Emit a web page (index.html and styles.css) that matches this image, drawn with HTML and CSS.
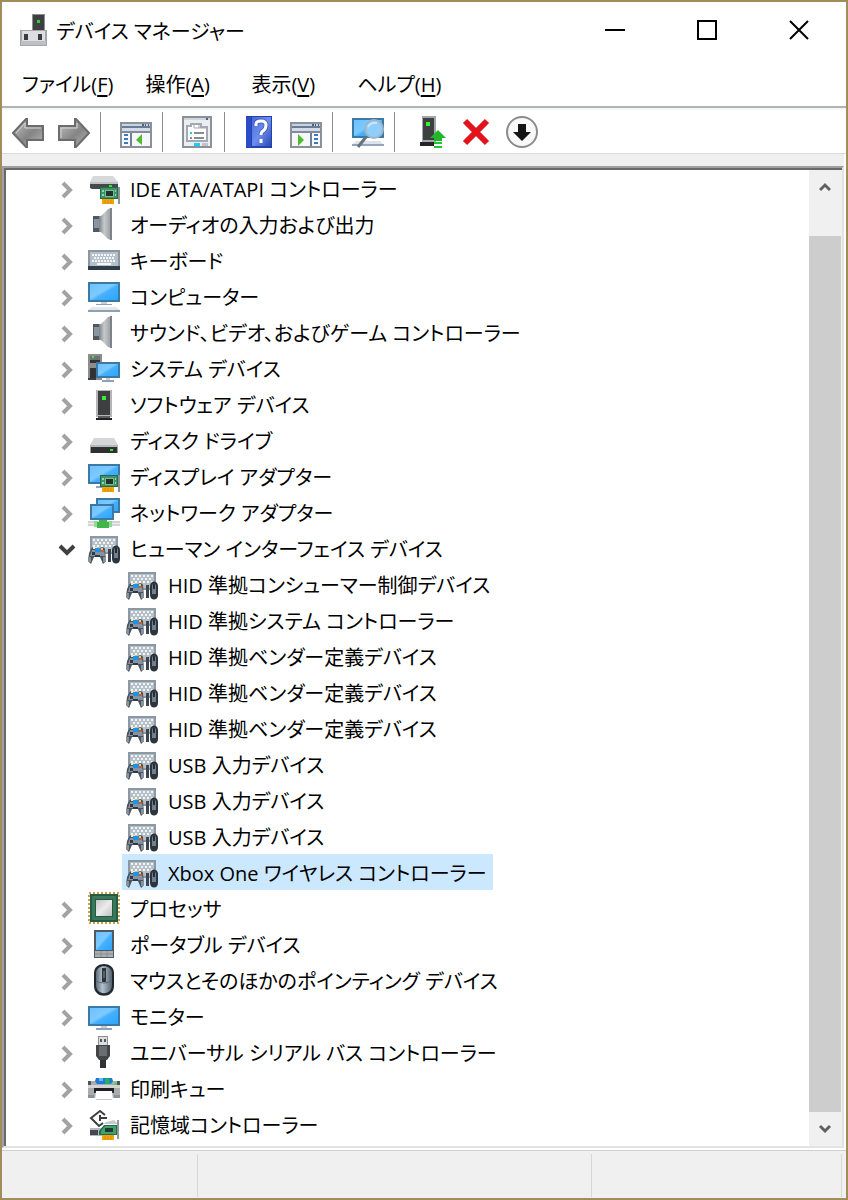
FILE: index.html
```html
<!DOCTYPE html>
<html lang="ja">
<head>
  <meta charset="UTF-8">
  <meta name="viewport" content="width=device-width, initial-scale=1">
  <title>デバイス マネージャー</title>
  <link rel="stylesheet" href="styles.css">
</head>
<body>

<!-- icon sprite -->
<svg class="sprite" aria-hidden="true">
  <defs>
    <linearGradient id="screen" x1="0" y1="0" x2="1" y2="1">
      <stop offset="0" stop-color="#6cc0ff"/><stop offset=".45" stop-color="#7ccaff"/><stop offset=".55" stop-color="#45b0ff"/><stop offset="1" stop-color="#2aa4fb"/>
    </linearGradient>
    <linearGradient id="metal" x1="0" y1="0" x2="1" y2="0">
      <stop offset="0" stop-color="#7c8288"/><stop offset=".4" stop-color="#c6cacd"/><stop offset="1" stop-color="#92979c"/>
    </linearGradient>
    <linearGradient id="silver" x1="0" y1="0" x2="1" y2="1">
      <stop offset="0" stop-color="#c4c4c4"/><stop offset=".5" stop-color="#ececec"/><stop offset="1" stop-color="#c0c0c0"/>
    </linearGradient>
    <linearGradient id="arrow" x1="0" y1="0" x2="1" y2="1">
      <stop offset="0" stop-color="#c4c4c4"/><stop offset=".55" stop-color="#858585"/><stop offset="1" stop-color="#b4b4b4"/>
    </linearGradient>
    <linearGradient id="book" x1="0" y1="0" x2="1" y2="1">
      <stop offset="0" stop-color="#4668dc"/><stop offset=".5" stop-color="#6f8df0"/><stop offset="1" stop-color="#2848b4"/>
    </linearGradient>
    <linearGradient id="shell" x1="0" y1="0" x2="1" y2="0">
      <stop offset="0" stop-color="#5f6c7a"/><stop offset=".4" stop-color="#b4c2d0"/><stop offset="1" stop-color="#56626e"/>
    </linearGradient>
  </defs>

  <symbol id="i-card" viewBox="0 0 32 32">
    <path d="M28 15h4v17h-2V17h-2z" fill="#8e9296"/>
    <path d="M12 15h18v12H12z" fill="#1f6e48"/>
    <path d="M13 16h16v10H13z" fill="#3c9467"/>
    <path d="M17 18h9v7h-9z" fill="#7fb89a"/>
    <path d="M18 19h7v5h-7z" fill="#22332c"/>
    <path d="M14 18h2v2h-2zM14 22h2v2h-2zM27 18h1v2h-1zM27 22h1v2h-1z" fill="#9fd0b4"/>
    <path d="M14 27h12v5H14z" fill="#f5a30a"/>
    <path d="M17 28v4M20 28v4M23 28v4" stroke="#dc8c00"/>
  </symbol>

  <symbol id="i-ide" viewBox="0 0 32 32">
    <path d="M5 4h20l5 6v1H2v-1z" fill="#d6d8da"/>
    <path d="M2 10h28v2H2z" fill="#bfc2c5"/>
    <path d="M2 12h28v5H4l-2-1z" fill="#45484a"/>
    <path d="M21 13h3v2h-3z" fill="#2ee82e"/>
    <use href="#i-card"/>
  </symbol>

  <symbol id="i-speaker" viewBox="0 0 32 32">
    <path d="M11 8h2l7-7 4-1v32l-4-1-7-7h-2z" fill="url(#metal)"/>
    <path d="M22 0h2v32h-2z" fill="#7d8389"/>
    <path d="M5 8h6v16H5z" fill="#4e5861"/>
    <path d="M6 11h5v9H6z" fill="#8996a1"/>
  </symbol>

  <symbol id="i-keyboard" viewBox="0 0 32 32">
    <path d="M0 6h32v20H0z" fill="#8a96a1"/>
    <path d="M2 8h28v14H2z" fill="#b6c0c9"/>
    <path d="M4 11h24M6 14h21M4 17h24" stroke="#f4f6f8" stroke-width="2" stroke-dasharray="2 1"/>
    <path d="M9 20h14" stroke="#f4f6f8" stroke-width="2"/>
    <path d="M0 22h32v4H0z" fill="#303c47"/>
  </symbol>

  <symbol id="i-monitor" viewBox="0 0 32 32">
    <path d="M1 7h30v18H1z" fill="url(#screen)" stroke="#3c7aa5" stroke-width="2"/>
    <path d="M13 26h6v2h-6z" fill="#c5cfda"/>
    <path d="M8 28h16v2H8z" fill="#91a1b8"/>
  </symbol>

  <symbol id="i-computer" viewBox="0 0 32 32">
    <path d="M1 3h30v18H1z" fill="url(#screen)" stroke="#3c7aa5" stroke-width="2"/>
    <path d="M8 24h16v1H8z" fill="#91a1b8"/>
    <path d="M13 22h6v2h-6z" fill="#c5cfda"/>
    <path d="M4 27h24l4 3H0z" fill="#e2e7ec"/>
    <path d="M0 30h32v2H0z" fill="#8fa0b6"/>
  </symbol>

  <symbol id="i-system" viewBox="0 0 32 32">
    <path d="M0 2h14v26H0z" fill="#8b8d8f"/>
    <path d="M2 4h10v4H2z" fill="#6e7072"/>
    <path d="M2 8h10v3H2zM2 16h7v10H2z" fill="#303234"/>
    <path d="M4 4h2v2H4z" fill="#35ef35"/>
    <path d="M0 26h8v2H0z" fill="#3a3c3e"/>
    <path d="M9 11h22v14H9z" fill="url(#screen)" stroke="#3c7aa5" stroke-width="2"/>
    <path d="M18 26h4v2h-4z" fill="#c5cfda"/>
    <path d="M14 28h12v2H14z" fill="#91a1b8"/>
  </symbol>

  <symbol id="i-tower" viewBox="0 0 32 32">
    <path d="M8 2h16v27H8z" fill="#b4b6b8"/>
    <path d="M10 3h12v24H10z" fill="#3d3f40"/>
    <path d="M14 8h4v4h-4z" fill="#35f035"/>
    <path d="M10 28h12v2H10z" fill="#5a5c5e"/>
    <path d="M8 30h16v2H8z" fill="#202122"/>
  </symbol>

  <symbol id="i-disk" viewBox="0 0 32 32">
    <path d="M6 14h20l4 7H2z" fill="#d4d6d8"/>
    <path d="M2 21h28v2H2z" fill="#b8babc"/>
    <path d="M3 23h26v6H3z" fill="#2e3032"/>
    <path d="M2 23h1v6H2zM29 23h1v6h-1z" fill="#9a9c9e"/>
    <path d="M22 25h3v2h-3z" fill="#2ee82e"/>
  </symbol>

  <symbol id="i-display" viewBox="0 0 32 32">
    <path d="M1 5h30v18H1z" fill="url(#screen)" stroke="#3c7aa5" stroke-width="2"/>
    <path d="M8 26h8v2H8z" fill="#91a1b8"/>
    <use href="#i-card"/>
  </symbol>

  <symbol id="i-network" viewBox="0 0 32 32">
    <path d="M0 25h32v5H0z" fill="#d3d5d7"/>
    <path d="M0 27h32v1H0z" fill="#eceeef"/>
    <path d="M9 3h22v13H9z" fill="url(#screen)" stroke="#3c7aa5" stroke-width="2"/>
    <path d="M3 9h22v14H3z" fill="url(#screen)" stroke="#3c7aa5" stroke-width="2"/>
    <path d="M11 24h8v2h2v6H9v-6h2z" fill="#3fb54a"/>
    <path d="M6 25h3v6H6zM21 25h3v6h-3z" fill="#8fdc8f"/>
  </symbol>

  <symbol id="i-hid" viewBox="0 0 32 32">
    <path d="M2 4h28v18H2z" fill="#8c98a3"/>
    <path d="M4 6h24v14H4z" fill="#b5bfc8"/>
    <path d="M5 8h22M7 11h20M5 14h22" stroke="#f2f4f6" stroke-width="2" stroke-dasharray="2 2"/>
    <path d="M3 17c1-2 3-2 4-1h5c2-1 4-1 5 1l1 12-3 3-3-7H6l-3 7-3-3 1-8z" fill="#4a545e"/>
    <path d="M4 18h12l1 6H2z" fill="#8793a0"/>
    <path d="M0 25h3v5H0zM15 25h3v5h-3z" fill="#87929c"/>
    <path d="M5 15h4v2H5z" fill="#f5e9b0"/>
    <path d="M7 16h6v4H7z" fill="#1d93e8"/>
    <path d="M13 16h2v2h-2z" fill="#f4c94b"/>
    <path d="M13 18h3v2h-3z" fill="#d9552b"/>
    <path d="M4 20h3v3H4zM7 23h5v2H7z" fill="#313a42"/>
    <path d="M20 17h3v13h-3z" fill="#3b454f"/>
    <path d="M24 18c0-6 8-6 8 0v9c0 6-8 6-8 0z" fill="#2c353e"/>
    <path d="M26 18c0-3 4-3 4 0v8h-4z" fill="#71808f"/>
    <path d="M27 16h2v5h-2z" fill="#252c33"/>
  </symbol>

  <symbol id="i-cpu" viewBox="0 0 32 32">
    <path d="M1 1h30v30H1z" fill="none" stroke="#c9a14a" stroke-width="2" stroke-dasharray="2 2"/>
    <path d="M2 2h28v28H2z" fill="#245c43"/>
    <path d="M4 4h24v24H4z" fill="#39785a"/>
    <path d="M7 7h18v18H7z" fill="#285642"/>
    <path d="M8 8h16v16H8z" fill="url(#silver)"/>
  </symbol>

  <symbol id="i-portable" viewBox="0 0 32 32">
    <path d="M6 2h20v28H6z" fill="#4e5a64"/>
    <path d="M8 4h16v18H8z" fill="url(#screen)"/>
    <path d="M7 23h18v6H7z" fill="#a9adb1"/>
    <path d="M7 26h18M13 23v6M19 23v6" stroke="#8a9095"/>
  </symbol>

  <symbol id="i-mouse" viewBox="0 0 32 32">
    <path d="M6 9c0-12 20-12 20 0v13c0 13-20 13-20 0z" fill="#20272e"/>
    <path d="M8 9c0-9 16-9 16 0v12c0 11-16 11-16 0z" fill="url(#shell)"/>
    <path d="M8 17q8 4 16 0" fill="none" stroke="#5c6a78"/>
    <path d="M14 4h4v14h-4z" fill="#2e343a"/>
    <path d="M15 7h2v7h-2z" fill="#596169"/>
  </symbol>

  <symbol id="i-usb" viewBox="0 0 32 32">
    <path d="M10 0h10v9H10z" fill="#8d8f91"/>
    <path d="M11 1h8v8h-8z" fill="#dcdee0"/>
    <path d="M12 3h2v3h-2zM16 3h2v3h-2z" fill="#55585a"/>
    <path d="M8 9h14v11l-3 4h-8l-3-4z" fill="#434547"/>
    <path d="M11 10h8v10h-8z" fill="#6b6e70"/>
    <path d="M12 24h6v8h-6z" fill="#303234"/>
  </symbol>

  <symbol id="i-printer" viewBox="0 0 32 32">
    <path d="M8 6h16l2 6H6z" fill="#2278d6"/>
    <path d="M11 6h4v3h-4z" fill="#6fb8f8"/>
    <path d="M17 6h4l1 6h-5z" fill="#1fb060"/>
    <path d="M3 9h4l2 3h14l2-3h4l3 4v13H0V13z" fill="#aaadb0"/>
    <path d="M0 13h32v3H0z" fill="#d2d4d6"/>
    <path d="M0 9h3v4H0zM29 9h3v4h-3z" fill="#505356"/>
    <path d="M26 11h3v2h-3z" fill="#35e835"/>
    <path d="M6 16h20v5H6z" fill="#1e2022"/>
    <path d="M8 19h16l1 9H7z" fill="#fff"/>
    <path d="M8 27h16v1H8z" fill="#c5c7c9"/>
    <path d="M0 23h6v3H0zM26 23h6v3h-6z" fill="#8f9295"/>
  </symbol>

  <symbol id="i-storage" viewBox="0 0 32 32">
    <path d="M2 20h20v8H2z" fill="#b4b8bb"/>
    <path d="M2 22h8v5H2z" fill="#44484c"/>
    <path d="M18 14l8-2 4 4H16z" fill="#c8cbce"/>
    <path d="M17 7l-5-4-9 7 8 8 4-3" fill="none" stroke="#3c3f42" stroke-width="2"/>
    <path d="M19 10h-8M12 7v6" fill="none" stroke="#3c3f42" stroke-width="2"/>
    <path d="M29 12h2v19h-2z" fill="#94989c"/>
    <path d="M11 23l5-6h13v10H11z" fill="#1f6e48"/>
    <path d="M13 23l4-5h11v8H13z" fill="#43a072"/>
    <path d="M17 20h8v4h-8z" fill="#203a2e"/>
    <path d="M14 27h12v5H14z" fill="#f5a30a"/>
    <path d="M17 28v4M20 28v4M23 28v4" stroke="#dc8c00"/>
  </symbol>

  <symbol id="i-app" viewBox="0 0 32 32">
    <path d="M14 0h13v17H14z" fill="#8d8f91"/>
    <path d="M15 1h11v16H15z" fill="#3d3f41"/>
    <path d="M19 6h3v3h-3z" fill="#2fd02f"/>
    <path d="M2 16h27v16H2z" fill="#a4a6aa"/>
    <path d="M4 17h23v10H4z" fill="#dcdee2"/>
    <path d="M3 27h25v4H3z" fill="#bcbfc3"/>
    <path d="M6 20h4v6H6zM20 20h4v6h-4z" fill="#3a3c3e"/>
  </symbol>

  <symbol id="t-back" viewBox="0 0 32 32">
    <path d="M1 17L14 3h1v7h16v14H15v7h-1z" fill="url(#arrow)" stroke="#6c6c6c" stroke-width="2"/>
    <path d="M4 17l9-10v5h16" fill="none" stroke="#d6d6d6"/>
  </symbol>
  <symbol id="t-forward" viewBox="0 0 32 32">
    <path d="M31 17L18 3h-1v7H1v14h16v7h1z" fill="url(#arrow)" stroke="#6c6c6c" stroke-width="2"/>
    <path d="M3 22V12h16V7" fill="none" stroke="#d6d6d6"/>
  </symbol>
  <symbol id="t-frame" viewBox="0 0 32 32">
    <path d="M1 7h30v24H1z" fill="#f6f7f8" stroke="#8b9199" stroke-width="2"/>
    <path d="M2 8h28v2H2z" fill="#c9d3e2"/>
    <path d="M2 10h28v2H2z" fill="#6b7b95"/>
    <path d="M2 12h28v3H2z" fill="#d5dbe4"/>
    <path d="M2 15h28v2H2z" fill="#7f8ba0"/>
    <path d="M22 8h2v2h-2zM25 8h1v2h-1zM28 8h1v2h-1z" fill="#4b5f82"/>
  </symbol>
  <symbol id="t-tree" viewBox="0 0 32 32">
    <use href="#t-frame"/>
    <path d="M10 17h2v13h-2z" fill="#6f7f9a"/>
    <path d="M4 19h4M4 23h4M4 27h4" stroke="#3f79bd" stroke-width="2"/>
    <path d="M16 24l6-6v11z" fill="#4fbb2d"/>
  </symbol>
  <symbol id="t-action" viewBox="0 0 32 32">
    <use href="#t-frame"/>
    <path d="M20 17h2v13h-2z" fill="#6f7f9a"/>
    <path d="M24 19h4M24 23h4M24 27h4" stroke="#3f79bd" stroke-width="2"/>
    <path d="M8 18l6 6-6 6z" fill="#4fbb2d"/>
  </symbol>
  <symbol id="t-properties" viewBox="0 0 32 32">
    <path d="M1 1h28v30H1z" fill="#eceef0" stroke="#8b9199" stroke-width="2"/>
    <path d="M2 2h26v2H2z" fill="#d0d6de"/>
    <path d="M24 2h2v2h-2z" fill="#4b5f82"/>
    <path d="M5 10h4V8h10v3h6v14H5z" fill="#fff" stroke="#a4a8b4" stroke-width="2"/>
    <path d="M12 9v3h13M17 9v3" fill="none" stroke="#a4a8b4"/>
    <path d="M8 16h2v2H8z" fill="#18cdf2"/>
    <path d="M8 21h2v2H8zM12 16h10v2H12zM12 21h10v2H12z" fill="#868c94"/>
    <path d="M12 27h6v3h-6z" fill="#18cdf2"/>
    <path d="M20 27h6v3h-6z" fill="#bfc4c9"/>
  </symbol>
  <symbol id="t-help" viewBox="0 0 32 32">
    <path d="M2 0h26v32H2z" fill="#2342ac"/>
    <path d="M8 1h19v29H8z" fill="url(#book)"/>
    <path d="M2 1h5v30H2z" fill="#2a4cc8"/>
    <path d="M12 10V8q0-3 5-3t5 4-3 6q-2 1-2 4" fill="none" stroke="#1c348c" stroke-width="5" opacity=".4"/>
    <path d="M12 10V8q0-3 5-3t5 4-3 6q-2 1-2 4M17 23v4" fill="none" stroke="#fff" stroke-width="3"/>
  </symbol>
  <symbol id="t-scan" viewBox="0 0 32 32">
    <path d="M1 3h30v18H1z" fill="url(#screen)" stroke="#3c7aa5" stroke-width="2"/>
    <path d="M4 25h24l4 4H0z" fill="#dde3ea"/>
    <path d="M0 28h32v2H0z" fill="#96a5b8"/>
    <path d="M14 21L6 31" stroke="#66727e" stroke-width="3"/>
    <circle cx="22" cy="13" r="9" fill="#8fcdfa" stroke="#9fb4c6" stroke-width="2"/>
    <path d="M16 11q3-5 9-4" fill="none" stroke="#c9e7fd" stroke-width="2"/>
  </symbol>
  <symbol id="t-update" viewBox="0 0 32 32">
    <path d="M8 0h14v26H8z" fill="#a5a8aa"/>
    <path d="M9 2h11v22H9z" fill="#3d3f40"/>
    <path d="M12 6h4v4h-4z" fill="#35f035"/>
    <path d="M6 26h14v4H6z" fill="#222426"/>
    <path d="M24 14l8 8h-4v3h-8v-3h-4z" fill="#1fb82a"/>
    <path d="M20 27h8M20 31h8" stroke="#1fc832" stroke-width="2"/>
  </symbol>
  <symbol id="t-remove" viewBox="0 0 32 32">
    <path d="M5 5l22 22M27 5L5 27" stroke="#e3131b" stroke-width="6"/>
  </symbol>
  <symbol id="t-disable" viewBox="0 0 32 32">
    <circle cx="16" cy="16" r="15" fill="#f8f8f8" stroke="#8c8c8c" stroke-width="2"/>
    <path d="M12 8h8v8h5l-9 9-9-9h5z" fill="#141414"/>
  </symbol>

  <symbol id="i-closed" viewBox="0 0 12 18">
    <path d="M2 2l7 7-7 7" fill="none" stroke="#a3a3a3" stroke-width="4"/>
  </symbol>
  <symbol id="i-open" viewBox="0 0 18 12">
    <path d="M2 2l7 7 7-7" fill="none" stroke="#404040" stroke-width="4"/>
  </symbol>
</svg>

<div class="window">
  <header class="titlebar">
    <svg class="app-icon"><use href="#i-app"/></svg>
    <h1 class="title">デバイス マネージャー</h1>
    <button class="control" aria-label="最小化"><svg viewBox="0 0 20 20"><path d="M0 10h20"/></svg></button>
    <button class="control" aria-label="最大化"><svg viewBox="0 0 20 20"><path d="M1 1h18v18H1z"/></svg></button>
    <button class="control" aria-label="閉じる"><svg viewBox="0 0 20 20"><path d="M1 1l18 18M19 1L1 19"/></svg></button>
  </header>

  <nav class="menubar">
    <button class="menu">ファイル(<u>F</u>)</button>
    <button class="menu">操作(<u>A</u>)</button>
    <button class="menu">表示(<u>V</u>)</button>
    <button class="menu">ヘルプ(<u>H</u>)</button>
  </nav>

  <div class="toolbar">
    <button class="tool" aria-label="戻る"><svg><use href="#t-back"/></svg></button>
    <button class="tool" aria-label="進む"><svg><use href="#t-forward"/></svg></button>
    <span class="separator"></span>
    <button class="tool" aria-label="コンソール ツリーの表示"><svg><use href="#t-tree"/></svg></button>
    <span class="separator"></span>
    <button class="tool" aria-label="プロパティ"><svg><use href="#t-properties"/></svg></button>
    <span class="separator"></span>
    <button class="tool" aria-label="ヘルプ"><svg><use href="#t-help"/></svg></button>
    <button class="tool" aria-label="操作ウィンドウの表示"><svg><use href="#t-action"/></svg></button>
    <span class="separator"></span>
    <button class="tool" aria-label="ハードウェア変更のスキャン"><svg><use href="#t-scan"/></svg></button>
    <span class="separator"></span>
    <button class="tool" aria-label="ドライバーの更新"><svg><use href="#t-update"/></svg></button>
    <button class="tool" aria-label="アンインストール"><svg><use href="#t-remove"/></svg></button>
    <button class="tool" aria-label="無効にする"><svg><use href="#t-disable"/></svg></button>
  </div>

  <main class="pane">
    <ul class="tree">
      <li><div class="row"><button class="expander" aria-label="展開"><svg class="closed"><use href="#i-closed"/></svg></button><span class="item"><svg class="icon"><use href="#i-ide"/></svg>IDE ATA/ATAPI コントローラー</span></div></li>
      <li><div class="row"><button class="expander" aria-label="展開"><svg class="closed"><use href="#i-closed"/></svg></button><span class="item"><svg class="icon"><use href="#i-speaker"/></svg>オーディオの入力および出力</span></div></li>
      <li><div class="row"><button class="expander" aria-label="展開"><svg class="closed"><use href="#i-closed"/></svg></button><span class="item"><svg class="icon"><use href="#i-keyboard"/></svg>キーボード</span></div></li>
      <li><div class="row"><button class="expander" aria-label="展開"><svg class="closed"><use href="#i-closed"/></svg></button><span class="item"><svg class="icon"><use href="#i-computer"/></svg>コンピューター</span></div></li>
      <li><div class="row"><button class="expander" aria-label="展開"><svg class="closed"><use href="#i-closed"/></svg></button><span class="item"><svg class="icon"><use href="#i-speaker"/></svg>サウンド、ビデオ、およびゲーム コントローラー</span></div></li>
      <li><div class="row"><button class="expander" aria-label="展開"><svg class="closed"><use href="#i-closed"/></svg></button><span class="item"><svg class="icon"><use href="#i-system"/></svg>システム デバイス</span></div></li>
      <li><div class="row"><button class="expander" aria-label="展開"><svg class="closed"><use href="#i-closed"/></svg></button><span class="item"><svg class="icon"><use href="#i-tower"/></svg>ソフトウェア デバイス</span></div></li>
      <li><div class="row"><button class="expander" aria-label="展開"><svg class="closed"><use href="#i-closed"/></svg></button><span class="item"><svg class="icon"><use href="#i-disk"/></svg>ディスク ドライブ</span></div></li>
      <li><div class="row"><button class="expander" aria-label="展開"><svg class="closed"><use href="#i-closed"/></svg></button><span class="item"><svg class="icon"><use href="#i-display"/></svg>ディスプレイ アダプター</span></div></li>
      <li><div class="row"><button class="expander" aria-label="展開"><svg class="closed"><use href="#i-closed"/></svg></button><span class="item"><svg class="icon"><use href="#i-network"/></svg>ネットワーク アダプター</span></div></li>
      <li>
        <div class="row"><button class="expander" aria-label="折りたたむ"><svg class="open"><use href="#i-open"/></svg></button><span class="item"><svg class="icon"><use href="#i-hid"/></svg>ヒューマン インターフェイス デバイス</span></div>
        <ul class="children">
          <li class="row"><span class="item"><svg class="icon"><use href="#i-hid"/></svg>HID 準拠コンシューマー制御デバイス</span></li>
          <li class="row"><span class="item"><svg class="icon"><use href="#i-hid"/></svg>HID 準拠システム コントローラー</span></li>
          <li class="row"><span class="item"><svg class="icon"><use href="#i-hid"/></svg>HID 準拠ベンダー定義デバイス</span></li>
          <li class="row"><span class="item"><svg class="icon"><use href="#i-hid"/></svg>HID 準拠ベンダー定義デバイス</span></li>
          <li class="row"><span class="item"><svg class="icon"><use href="#i-hid"/></svg>HID 準拠ベンダー定義デバイス</span></li>
          <li class="row"><span class="item"><svg class="icon"><use href="#i-hid"/></svg>USB 入力デバイス</span></li>
          <li class="row"><span class="item"><svg class="icon"><use href="#i-hid"/></svg>USB 入力デバイス</span></li>
          <li class="row"><span class="item"><svg class="icon"><use href="#i-hid"/></svg>USB 入力デバイス</span></li>
          <li class="row"><span class="item selected"><svg class="icon"><use href="#i-hid"/></svg>Xbox One ワイヤレス コントローラー</span></li>
        </ul>
      </li>
      <li><div class="row"><button class="expander" aria-label="展開"><svg class="closed"><use href="#i-closed"/></svg></button><span class="item"><svg class="icon"><use href="#i-cpu"/></svg>プロセッサ</span></div></li>
      <li><div class="row"><button class="expander" aria-label="展開"><svg class="closed"><use href="#i-closed"/></svg></button><span class="item"><svg class="icon"><use href="#i-portable"/></svg>ポータブル デバイス</span></div></li>
      <li><div class="row"><button class="expander" aria-label="展開"><svg class="closed"><use href="#i-closed"/></svg></button><span class="item"><svg class="icon"><use href="#i-mouse"/></svg>マウスとそのほかのポインティング デバイス</span></div></li>
      <li><div class="row"><button class="expander" aria-label="展開"><svg class="closed"><use href="#i-closed"/></svg></button><span class="item"><svg class="icon"><use href="#i-monitor"/></svg>モニター</span></div></li>
      <li><div class="row"><button class="expander" aria-label="展開"><svg class="closed"><use href="#i-closed"/></svg></button><span class="item"><svg class="icon"><use href="#i-usb"/></svg>ユニバーサル シリアル バス コントローラー</span></div></li>
      <li><div class="row"><button class="expander" aria-label="展開"><svg class="closed"><use href="#i-closed"/></svg></button><span class="item"><svg class="icon"><use href="#i-printer"/></svg>印刷キュー</span></div></li>
      <li><div class="row"><button class="expander" aria-label="展開"><svg class="closed"><use href="#i-closed"/></svg></button><span class="item"><svg class="icon"><use href="#i-storage"/></svg>記憶域コントローラー</span></div></li>
    </ul>

    <div class="scrollbar">
      <button class="scroll-btn" aria-label="上へスクロール"><svg viewBox="0 0 12 10"><path d="M1 8l5-5 5 5"/></svg></button>
      <div class="track"><div class="thumb"></div></div>
      <button class="scroll-btn" aria-label="下へスクロール"><svg viewBox="0 0 12 10"><path d="M1 2l5 5 5-5"/></svg></button>
    </div>
  </main>

  <footer class="statusbar">
    <span class="status"></span>
    <span class="status"></span>
    <span class="status"></span>
  </footer>
</div>

</body>
</html>
```
FILE: styles.css
```css
* { box-sizing: border-box; }
body {
  margin: 0;
  font-family: "Open Sans", "Noto Sans CJK JP", sans-serif;
  font-size: 20px;
  font-weight: 400;
  font-feature-settings: "palt";
  color: #000;
}
button {
  padding: 0;
  border: none;
  background: none;
  font: inherit;
  font-feature-settings: inherit;
  color: inherit;
}
ul { list-style: none; margin: 0; padding: 0; }
.sprite { position: absolute; width: 0; height: 0; }

.window {
  display: flex;
  flex-direction: column;
  min-height: 100vh;
  border: 2px solid #a08d5c;
  background: #fff;
}

.titlebar {
  display: flex;
  align-items: center;
  height: 56px;
  padding: 0 1px 0 16px;
}
.app-icon { width: 32px; height: 32px; }
.title {
  flex: 1;
  margin: 0 0 0 6px;
  font-size: 20px;
  font-weight: 400;
}
.control {
  display: flex;
  align-items: center;
  justify-content: center;
  width: 92px;
  height: 100%;
}
.control svg {
  width: 20px;
  height: 20px;
  fill: none;
  stroke: #000;
  stroke-width: 2px;
}

.menubar {
  display: flex;
  gap: 32px;
  height: 50px;
  padding: 2px 20px 0;
  border-bottom: 2px solid #b2b2b2;
}
.menu { min-width: 74px; text-align: left; }
.menu u { text-decoration-thickness: 2px; text-underline-offset: 3px; }

.toolbar {
  display: flex;
  align-items: center;
  height: 46px;
  padding: 0 3px;
  border-top: 2px solid #f2f7fb;
  border-bottom: 1px solid #dadada;
}
.tool {
  display: flex;
  justify-content: center;
  width: 46px;
}
.tool svg { width: 32px; height: 32px; }
.separator {
  width: 1px;
  height: 40px;
  margin: 0 12px 0 3px;
  background: #8c8c8c;
}

.pane {
  flex: 1;
  display: flex;
  margin: 12px 2px 2px 0;
  border: 2px solid #a0a0a0;
  border-right-color: #e3e3e3;
  border-bottom-color: #e3e3e3;
  /* grey strip between toolbar and tree */
  box-shadow: 0 -12px 0 #efefef;
}

.tree {
  flex: 1;
  padding: 0 0 4px 40px;
  border-top: 2px solid #696969;
  border-left: 2px solid #696969;
}
.children { padding-left: 76px; }
.row {
  display: flex;
  height: 36px;
}
.expander {
  display: flex;
  align-items: center;
  justify-content: center;
  width: 38px;
  padding: 4px 0 0 3px;
}
.closed { width: 12px; height: 18px; }
.open { width: 18px; height: 12px; }
.item {
  display: flex;
  align-items: center;
  padding: 0 6px 0 4px;
  white-space: nowrap;
}
.icon { width: 32px; height: 32px; margin-right: 10px; }
.selected { background: #cce8ff; }

.scrollbar {
  display: flex;
  flex-direction: column;
  width: 33px;
  border-top: 2px solid #696969;
  background: #f0f0f0;
}
.scroll-btn {
  display: flex;
  align-items: center;
  justify-content: center;
  height: 34px;
  padding-right: 2px;
}
.scroll-btn svg {
  width: 12px;
  height: 10px;
  fill: none;
  stroke: #606060;
  stroke-width: 3px;
}
.track {
  flex: 1;
  display: flex;
  padding: 32px 1px 0 0;
}
.thumb { flex: 1; background: #cdcdcd; }

.statusbar {
  display: grid;
  grid-template-columns: 196px 394px 1fr;
  height: 48px;
  padding: 3px 4px 1px 0;
  border-top: 1px solid #d0d0d0;
  background: #f0f0f0;
}
.status { border-right: 1px solid #d7d7d7; }
```
